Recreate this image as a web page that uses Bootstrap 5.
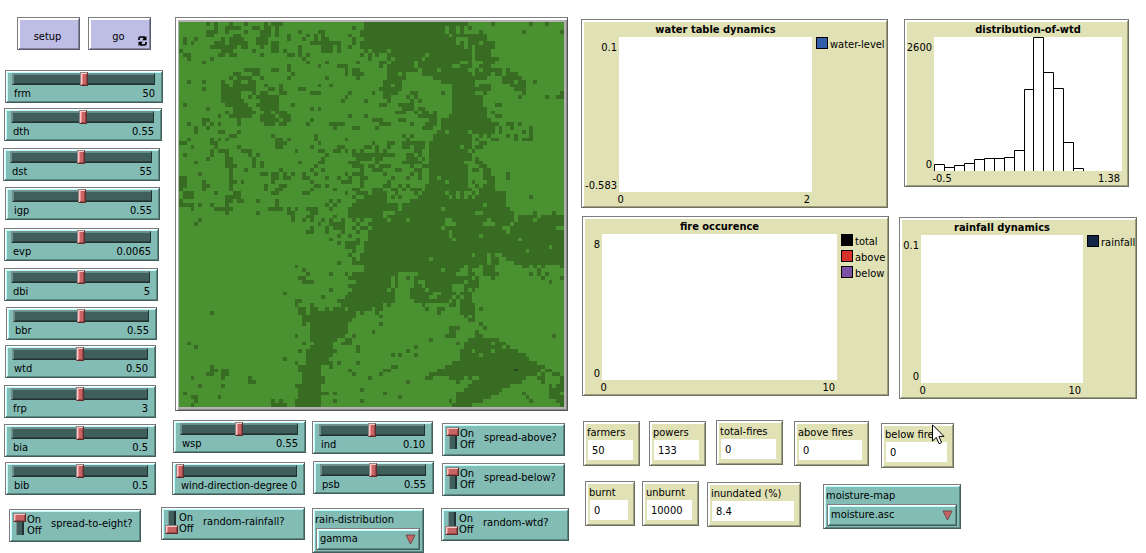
<!DOCTYPE html>
<html lang="en">
<head>
<meta charset="utf-8">
<title>Peatland fire model</title>
<link href="https://cdn.jsdelivr.net/npm/bootstrap@5.3.0/dist/css/bootstrap.min.css" rel="stylesheet">
<style>
body{font:11px/14px "DejaVu Sans Condensed","DejaVu Sans",sans-serif;font-stretch:condensed;color:#000;background:#fff;width:1146px;height:553px;overflow:hidden}
.widget{--face:#82bcb5;--hi:#b9ffff;--mid:#5b8580;--low:#415e5b;flex:none;background:var(--face);border:1px solid #7c7c7c;border-right-color:var(--low);border-bottom-color:var(--low);box-shadow:inset 1px 1px #fff,inset -1px -1px var(--mid),inset 2px 2px var(--hi);white-space:nowrap}
.tan{--face:#e0e1b5;--hi:#fff;--mid:#9e9f80;--low:#6e6f5a}
.cmd{--face:#bdbde5;--hi:#fff;--mid:#8484a0;--low:#5c5c70;width:63px;height:33px;position:relative;color:#000;font-size:11px;padding:6px 2px 0 0;border-radius:0;text-align:center;font-family:inherit;line-height:14px}
.cmd svg{position:absolute;right:3px;bottom:3px}
/* sliders */
.slider{height:33px;padding:2px 7px 0 6px}
.groove{height:12px;background:#405e5b;border:1px solid #7c8d8b;border-right-color:#213230;border-bottom-color:#213230;box-shadow:inset 1px 1px #62908b,inset 0 -1px #2d4340;display:flex;justify-content:center}
.knob{flex:none;width:8px;height:14px;margin-top:-2px;background:#c86464;border:1px solid #888;border-right-color:#602c2c;border-bottom-color:#602c2c;box-shadow:inset 1px 1px #ffc4c4,inset -1px -1px #944848,inset 2px 1px #f09090}
.cap{margin:2px 0 0 2px;display:flex;justify-content:space-between}
.zero .groove{justify-content:flex-start}.zero .knob{margin-left:-4px}
.zero .cap{letter-spacing:-.09px}
/* switches */
.switch{height:33px;display:flex;padding:3px 0 0 3px}
.rail{width:13px;height:23px;display:flex;flex-direction:column;align-items:center;background:linear-gradient(90deg,transparent 3px,#7c8d8b 3px 4px,#405e5b 4px 9px,#213230 9px 11px,transparent 11px) 0 0/13px 22px no-repeat}
.rail .knob{width:13px;height:9px;margin:0}
.rail.off{justify-content:flex-end}
.onoff{line-height:11px;margin:1px 0 0 1px;width:24px}
.swname{margin:4px 0 0 0}
/* choosers and monitors */
.chooser{height:45px;padding:3px 3px}
.chooser .widget{height:22px;display:flex;align-items:center;justify-content:space-between;padding:0 3px 0 3px;margin:1px 0 0}
.chooser .name{height:15px;padding-top:1px;margin-left:-1px}
.monitor{height:45px;padding:3px 6px 0 4px}
.monitor .val{background:#fff;height:20px;margin-top:1px;padding:4px 0 0 4px}
.monitor .name{height:14px;margin-left:-1px;padding-top:1px}
/* plots */
.plot{display:grid;grid-template-rows:17px 1fr 15px;font-size:11px}
.ttl{grid-column:2;font-weight:700;text-align:center;padding-top:3px;display:flex;justify-content:center}
.yax{grid-column:1;grid-row:2;display:flex;flex-direction:column;justify-content:space-between;align-items:flex-end;padding:4px 2px 0 0;margin-bottom:-1px}
.area{grid-column:2;grid-row:2;background:#fff}
.area svg{display:block}
.xax{grid-column:2;grid-row:3;display:flex;justify-content:space-between;padding:1px 2px 0 0;margin-left:-1.5px}
.leg{grid-column:3;grid-row:2;padding-left:4px}
.leg div{display:flex;height:16px;line-height:16px}
.leg i{width:12px;height:12px;border:1px solid #000;margin-right:2px}
/* left column */
.col-a{width:161px;flex:none;align-items:flex-start}
.buttons{margin:17px 0 0 17px;gap:8px}
.s1{width:158px;margin:20px 0 0 5px}.s2{width:158px;margin:5px 0 0 4px}.s3{width:157px;margin:7px 0 0 3px}
.s4{width:155px;margin:6px 0 0 5px}.s5{width:155px;margin:8px 0 0 4px}.s6{width:154px;margin:7px 0 0 4px}
.s7{width:151px;margin:6px 0 0 6px}.s8{width:151px;margin:5px 0 0 5px}.s9{width:152px;margin:7px 0 0 4px}
.s10{width:152px;margin:6px 0 0 4px}.s11{width:151px;margin:5px 0 0 5px}.s12{width:132px;margin:14px 0 0 9px}
/* world and the controls below it */
.world{width:393px;height:394px;margin:17px 0 0 14px;border:1px solid #808080;border-right-color:#555;border-bottom-color:#555;box-shadow:inset 2px 2px #fff,inset -1px -1px #888;background:#b4b1b4;padding:4px 0 0 3px}
.world svg{display:block}
.b1{width:145px}.b2{width:122px;margin-left:6px}.b3{width:128px;margin-left:7px}
.wsp{width:133px;margin:9px 0 0 12px}.wind{width:133px;margin:9px 0 0 11px}.rr{width:144px;margin-top:12px}
.ind{width:121px;margin-top:10px}.psb{width:121px;margin:7px 0 0 1px}.rain{width:112px;margin-top:14px}
.sa{width:123px;margin:12px 0 0 1px}.sb{width:123px;margin:7px 0 0 1px}.rw{width:128px;margin-top:12px}
/* plots column */
.col-c{margin-left:12px}
.p1{width:307px;height:189px;margin-top:19px;grid-template-columns:37px 193px 1fr}
.p2{width:307px;height:180px;margin:8px 0 0 1px;grid-template-columns:19px 235px 1fr}
.p3{width:225px;height:168px;margin:19px 0 0 15px;grid-template-columns:29px 188px 1fr}
.p4{width:238px;height:182px;margin:30px 0 0 10px;grid-template-columns:21px 162px 1fr}
.m1{width:57px;margin:22px 0 0 2px}.m2{width:57px;margin:22px 0 0 9px}.m3{width:67px;margin:21px 0 0 10px}
.m4{width:75px;margin:22px 0 0 11px}.m5{width:73px;margin:24px 0 0 12px;position:relative}
.m6{width:50px;margin:13px 0 0 4px}.m7{width:57px;margin:13px 0 0 7px}.m8{width:94px;margin:14px 0 0 8px}
.m9{width:138px;margin:16px 0 0 22px}
.pointer{position:absolute;left:50px;top:0}
</style>
</head>
<body>
<main class="d-flex">
  <section class="col-a d-flex flex-column">
    <div class="buttons d-flex">
      <button class="widget cmd">setup</button>
      <button class="widget cmd">go
        <svg width="9" height="10" viewBox="0 0 9 10" fill="none" stroke="#000" stroke-width="1.7"><path d="M1 4V2.4Q1 1 2.5 1H6.2V3M8 6V7.600Q8 9 6.500 9H2.800V7"/><path d="M4 4.300H8.500V0ZM5 5.700H.5V10Z" fill="#000" stroke="none"/></svg>
      </button>
    </div>
    <div class="widget slider s1"><div class="groove"><div class="knob"></div></div><div class="cap"><span>frm</span><span>50</span></div></div>
    <div class="widget slider s2"><div class="groove"><div class="knob"></div></div><div class="cap"><span>dth</span><span>0.55</span></div></div>
    <div class="widget slider s3"><div class="groove"><div class="knob"></div></div><div class="cap"><span>dst</span><span>55</span></div></div>
    <div class="widget slider s4"><div class="groove"><div class="knob"></div></div><div class="cap"><span>igp</span><span>0.55</span></div></div>
    <div class="widget slider s5"><div class="groove"><div class="knob"></div></div><div class="cap"><span>evp</span><span>0.0065</span></div></div>
    <div class="widget slider s6"><div class="groove"><div class="knob"></div></div><div class="cap"><span>dbi</span><span>5</span></div></div>
    <div class="widget slider s7"><div class="groove"><div class="knob"></div></div><div class="cap"><span>bbr</span><span>0.55</span></div></div>
    <div class="widget slider s8"><div class="groove"><div class="knob"></div></div><div class="cap"><span>wtd</span><span>0.50</span></div></div>
    <div class="widget slider s9"><div class="groove"><div class="knob"></div></div><div class="cap"><span>frp</span><span>3</span></div></div>
    <div class="widget slider s10"><div class="groove"><div class="knob"></div></div><div class="cap"><span>bia</span><span>0.5</span></div></div>
    <div class="widget slider s11"><div class="groove"><div class="knob"></div></div><div class="cap"><span>bib</span><span>0.5</span></div></div>
    <div class="widget switch s12"><div class="rail"><div class="knob"></div></div><div class="onoff">On<br>Off</div><div class="swname">spread-to-eight?</div></div>
  </section>

  <section class="flex-shrink-0">
    <div class="world"><svg id="world" width="385" height="385" viewBox="0 0 100 100" shape-rendering="crispEdges"><rect width="100" height="100" fill="#4a9132"/></svg></div>
    <div class="d-flex">
      <div class="b1">
        <div class="widget slider wsp"><div class="groove"><div class="knob"></div></div><div class="cap"><span>wsp</span><span>0.55</span></div></div>
        <div class="widget slider wind zero"><div class="groove"><div class="knob"></div></div><div class="cap"><span>wind-direction-degree</span><span>0</span></div></div>
        <div class="widget switch rr"><div class="rail off"><div class="knob"></div></div><div class="onoff">On<br>Off</div><div class="swname">random-rainfall?</div></div>
      </div>
      <div class="b2">
        <div class="widget slider ind"><div class="groove"><div class="knob"></div></div><div class="cap"><span>ind</span><span>0.10</span></div></div>
        <div class="widget slider psb"><div class="groove"><div class="knob"></div></div><div class="cap"><span>psb</span><span>0.55</span></div></div>
        <div class="widget chooser rain"><div class="name">rain-distribution</div><div class="widget"><span>gamma</span><svg width="11" height="11"><path d="M1 1H10L5.500 10Z" fill="#c86464" stroke="#6b4a4a"/></svg></div></div>
      </div>
      <div class="b3">
        <div class="widget switch sa"><div class="rail"><div class="knob"></div></div><div class="onoff">On<br>Off</div><div class="swname">spread-above?</div></div>
        <div class="widget switch sb"><div class="rail"><div class="knob"></div></div><div class="onoff">On<br>Off</div><div class="swname">spread-below?</div></div>
        <div class="widget switch rw"><div class="rail off"><div class="knob"></div></div><div class="onoff">On<br>Off</div><div class="swname">random-wtd?</div></div>
      </div>
    </div>
  </section>

  <section class="col-c flex-shrink-0">
    <div class="d-flex">
      <div>
        <div class="widget tan plot p1"><div class="ttl">water table dynamics</div><div class="yax"><span>0.1</span><span>-0.583</span></div><div class="area"></div><div class="xax"><span>0</span><span>2</span></div><div class="leg"><div><i style="background:#345da9"></i>water-level</div></div></div>
        <div class="widget tan plot p2"><div class="ttl">fire occurence</div><div class="yax"><span>8</span><span>0</span></div><div class="area"></div><div class="xax"><span>0</span><span>10</span></div><div class="leg"><div><i style="background:#000"></i>total</div><div><i style="background:#d73229"></i>above</div><div><i style="background:#7c50a4"></i>below</div></div></div>
      </div>
      <div>
        <div class="widget tan plot p3"><div class="ttl">distribution-of-wtd</div><div class="yax"><span>2600</span><span>0</span></div><div class="area"><svg id="bars" width="188" height="134" fill="none" stroke="#000"></svg></div><div class="xax"><span>-0.5</span><span>1.38</span></div></div>
        <div class="widget tan plot p4"><div class="ttl">rainfall dynamics</div><div class="yax"><span>0.1</span><span>0</span></div><div class="area"></div><div class="xax"><span>0</span><span>10</span></div><div class="leg"><div><i style="background:#152547"></i>rainfall</div></div></div>
      </div>
    </div>
    <div class="d-flex align-items-start">
      <div class="widget tan monitor m1"><div class="name">farmers</div><div class="val">50</div></div>
      <div class="widget tan monitor m2"><div class="name">powers</div><div class="val">133</div></div>
      <div class="widget tan monitor m3"><div class="name">total-fires</div><div class="val">0</div></div>
      <div class="widget tan monitor m4"><div class="name">above fires</div><div class="val">0</div></div>
      <div class="widget tan monitor m5"><div class="name">below fires</div><div class="val">0</div>
        <svg class="pointer" width="13" height="21" viewBox="0 0 13 21"><path d="M.5 .8V17L4.300 13.400L7 19.700L9.600 18.600L6.900 12.400H12Z" fill="#fff" stroke="#000"/></svg></div>
    </div>
    <div class="d-flex align-items-start">
      <div class="widget tan monitor m6"><div class="name">burnt</div><div class="val">0</div></div>
      <div class="widget tan monitor m7"><div class="name">unburnt</div><div class="val">10000</div></div>
      <div class="widget tan monitor m8"><div class="name">inundated (%)</div><div class="val">8.4</div></div>
      <div class="widget chooser m9"><div class="name">moisture-map</div><div class="widget"><span>moisture.asc</span><svg width="11" height="11"><path d="M1 1H10L5.500 10Z" fill="#c86464" stroke="#6b4a4a"/></svg></div></div>
    </div>
  </section>
</main>
<script src="https://cdn.jsdelivr.net/npm/bootstrap@5.3.0/dist/js/bootstrap.bundle.min.js"></script>
<script>
// Wet patches of the 100 x 100 world, one line per row: columns or first-last column ranges.
const wet = `7 9 13 17 22 24-26 48-74 81 91 95
9 12-15 19-20 22-23 25 45 48-68 70-71 73 75
7-9 12 17 21-23 25 31 36-37 47-68 70-71 73 78 89 99
7-8 14-15 21-22 23 25 28 33 35 37 44 47-69 71-79
1 4 11 13-16 20-22 28 32 35 37-38 45 48-71 75-79
1 3 9-11 13-17 20-22 24-25 34-41 45 47-71 73 75-77 79-81
8-14 16-17 21 24-25 31 37-39 41 44 47-73 75 77-81
0 11-13 19 24-25 27 31 37-39 41 48 50-53 55-75 77-80
1-2 10-11 13-14 21 28-29 31 33 47 49 51 54-63 65-75 77-80
2 8 32 49 54 56-62 64-75 77-82
6 33 38 46 52-53 55-60 62-72 75 79-81
28 36 41-43 52 54-60 62-70 73-75 78-80
17-20 24-25 28 43 45-46 54-61 63-66 68-74 77 79-83 85
14-15 19-20 29 43 45-47 54-56 58 63-75 77-80 82-83 85-87
13 15-18 21 28 38 46 54-58 66-79 84-88
2 6 11 14-15 18-19 53-57 68-76 84-86 88-89 92
11-12 14-17 18-19 22 26 36 39 53-54 56-57 71-76 78-80 86-89
6 11-15 16-19 23-24 26 31-32 52-57 71-80 87-89
11-15 19 21-22 26-27 34-36 44 50 53-56 60-61 68 71-76 79 89 99
11-15 18 20-25 43 53-54 59 61 71-78 88 95 98-99
11-16 21-25 42 48 54 60 62 71-78
1 12-17 20-25 29 52-53 57-60 71-78 82-83
7 14-18 21-25 34 36 58-60 62-63 71-79
12 14-19 22-23 25-27 56-58 61 63-64 66 71-79 81
10 13-18 21-24 26-28 44 48 62-66 70-79 82-83
6-7 15 21-25 27-28 34 50-52 57-58 65-66 68-80
2 6 8 10 15 22-24 26-27 33 39-42 52-54 60 64-66 68-82 85-86 88
4 7 40 45-46 51 63-65 68-81 83 86 91
4 10-11 15 67-68 70-74 76-81 83 89 91
13-14 24 35 58 60 66-75 78 80 85 87 91
2 8 10 12 25-26 28 35 43 59 66-75 77 81-82 87 89-91
0-1 8-9 25-27 36 50 54-55 58-63 65-75 78-79
3 9 15 25-26 34 41-42 48-49 51 54 58-59 61-63 65-72 74-75 77-78
8 10-12 16-18 30 36-37 40-41 43 45 47 51 53 61-62 65-74 76
1 8 12 18 20 38 45-55 59-60 62 65-75
7 12-13 19 37 46-49 51-52 59-61 63 65-75 77
4 12-13 19 21 31 36-37 44-46 51 58-62 65-73 77-78
12-14 19 21 35 45-47 49-50 52-54 60 63-74 78-79
13 17 26 34 37 47 50-52 56-57 61-62 65-74 76-77 79-80
5 13 21-22 24-25 27 29 32 35 43 45-47 53 60 62 65-74 79-80 85
0-1 13 24-25 27-28 32-33 38 41 44 47-48 55 59 62 65-66 68-74 79-81 85
0-1 6 13-14 16 24 34 42-44 47 54 65-68 70-74 76 80-81
0-1 6-7 13 22 26-27 35-36 38 47 53-54 57 59 64-74 77 79-81
0 6 13 22 25-26 34 40 45-46 50-52 55-56 58 60-62 64-75 78-81
1-3 9 14-15 24-25 32-33 43 46-48 50-53 56 61 63-68 70-71 73 76 78-84
1-3 12-15 45 48-53 55 57 62-69 71 73 75 77-84 91
0 12-13 15-16 20 25 39 41 46-53 60-84
0-3 5 8 12 25 38 40 45-56 58-78 80-84
3 9-13 23-26 28 30 33-35 39 44-56 58-67 69-85
12 20 28-29 34-35 44-52 56-76 79-86 92 97
29 33-34 40 44-52 54-86 88-92 94-99
5 29 32 34 37 39 42 45 47 50-53 55-58 60-68 71-79 81-86 88-91 93-99
4 36 39-42 46 49-68 72-78 82-85 87-99
34 38 40-42 45 47-48 50-67 69-83 86-97
33-34 38 42 46 49-69 71-84 86-99
41 44 49-69 71-77 79-99
39 46 49-70 72-87 89-99
41 43-46 48-99
43-45 48-95 97-99
45 48-89 91-99
44 47-75 77-79 81 84-99
45 47-64 66-79 81-82 85-99
41 45-79 81-82 87-99
30 48-73 75-77 79-81 89-90 92 94 99
32 48-67 69-72 75 79-81 93
33 39 43 45-56 62-71 75-76 79-82 91 93 95
31-32 44-54 56 59 61-75 77 81 94 99
32-34 46-54 56 61 64-73 75-77 96
44-54 56 61-62 64-70 74-77
39 45-53 55 60-63 65-70 74 76
27 44-55 60-65 68-71 73-75
37 43-55 60-64 67-70 72 74-75
30-31 41-55 61-69 71 73-75
30 34 42-52 54 63 70-71 73-76
31-32 34-35 38 40-42 44-49 51-52 64 67-68 73-76 78
8 31-32 34-45 47 51 67 73-76
32-45 52 74 76
32-44 75-76
32 34-43 52 78
34-43 70-72 79
34-43 50 70-71 77
30 34-42 45 69-71 77-78 97
34-40 43-44 65 75-82
2 32 35-39 42-44 72 74-80 82-84
4 34-39 46 61 74-83 85
31 33-40 46 59 73-75 77-80 82-87
33-39 55 57 61 73-77 79-89
27 33-38 73-90
30 33-39 41 46 71-92
8 31-36 39 55-56 69-94
8-9 11-12 31-36 44 53-54 67-93 95-96
7-8 11-12 32-36 45 52 65-92 94 97-98
3 11 18 32-37 49 64-65 70-73 75 78-89 93-94 99
18-19 32-37 59 72 76-88 94 99
5 11 30 31-36 75-85 96 98-99
31-36 47 74-83 96-99
1 31-38 40 53 72-82 89 96-98
3-4 10 31-36 57 72-80 90 96-99
4 24 26 30-36 40 47 70 72-78 91 98-99
3 24-27 30-36 71-75 99`;
let d = '';
wet.split('\n').forEach((row, y) => row.split(' ').forEach(run => {
  const [a, b = a] = run.split('-').map(Number);
  d += `M${a} ${y}H${b + 1}V${y + 1}H${a}Z`;
}));
document.getElementById('world').insertAdjacentHTML('beforeend',
  `<path d="${d}" fill="#386c22"/><path d="M87 90h1v.75h-1zm.25 .25v.25h.25v-.25z" fill="#263c1c" fill-rule="evenodd"/>`);
// Histogram: left edge and top of each bar
const edges = [0,10,20,30,40,50,60,70,80,90,99,109,119,129,139,149];
const tops = [127,130,128,126,122,121,121,120,113,52,0,35,51,105,131];
document.getElementById('bars').innerHTML = tops.map((t, i) =>
  `<path d="M${edges[i] + .5} 134V${t + .5}H${edges[i + 1] + .5}V134"/>`).join('');
</script>
</body>
</html>
